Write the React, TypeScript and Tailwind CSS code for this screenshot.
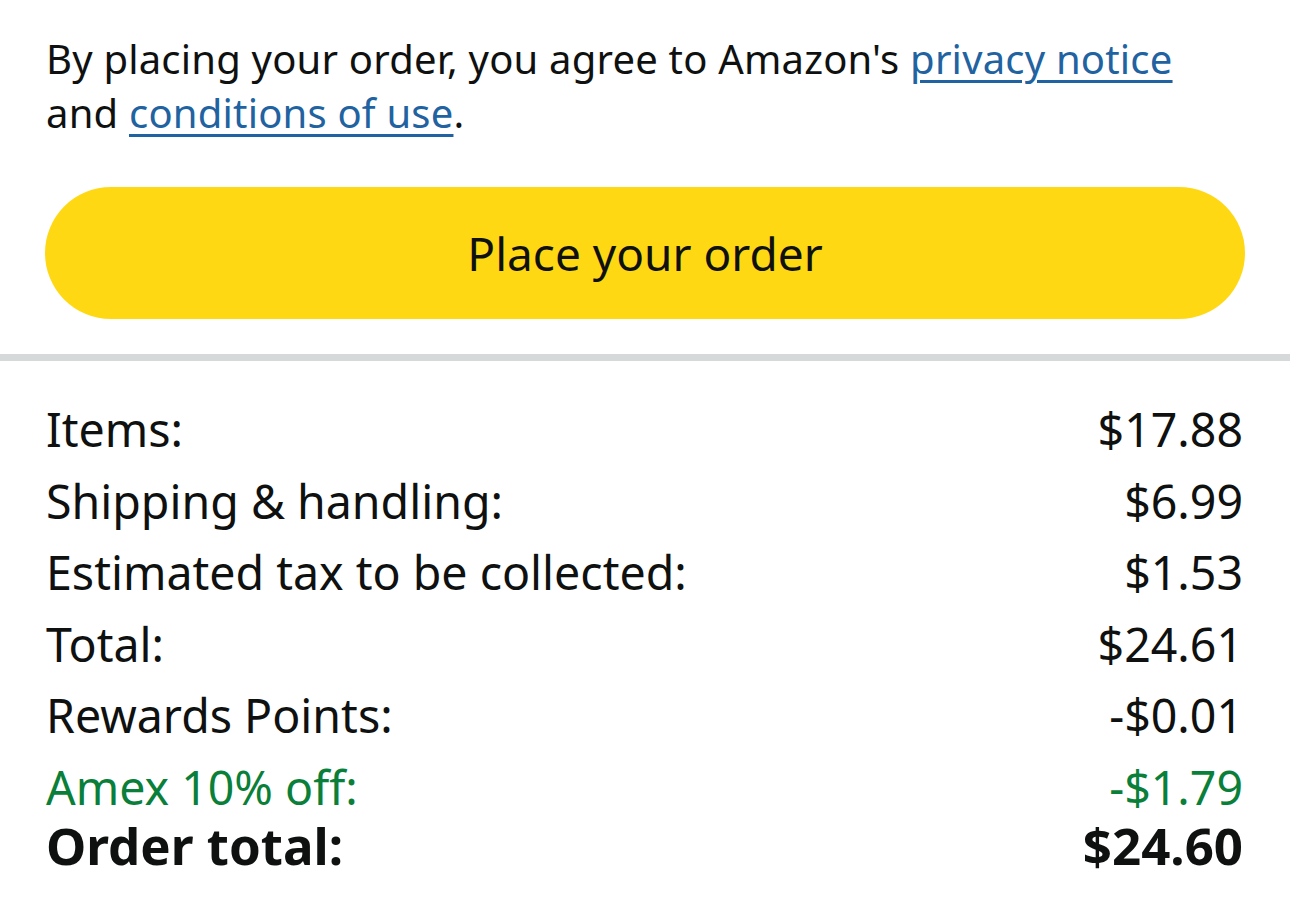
import React from "react";

const rows = [
  { label: "Items:", value: "$17.88" },
  { label: "Shipping & handling:", value: "$6.99" },
  { label: "Estimated tax to be collected:", value: "$1.53" },
  { label: "Total:", value: "$24.61" },
  { label: "Rewards Points:", value: "-$0.01" },
];

export default function App() {
  return (
    <div
      className="w-[1290px] h-[920px] bg-white text-[#0f1111] overflow-hidden"
      style={{ fontFamily: '"Noto Sans", "Open Sans", sans-serif' }}
    >
      {/* Agreement + button */}
      <div className="px-[46px] pt-[32px]">
        <p className="text-[40px] leading-[54px] tracking-[0.2px]">
          By placing your order, you agree to Amazon's{" "}
          <a className="text-[#2162a1] underline underline-offset-[6px] decoration-[3px]">
            privacy notice
          </a>{" "}
          and{" "}
          <a className="text-[#2162a1] underline underline-offset-[6px] decoration-[3px]">
            conditions of use
          </a>
          .
        </p>
        <button className="mt-[47px] w-[1200px] h-[132px] rounded-full bg-[#ffd814] text-[46px] text-[#0f1111] -ml-px">
          Place your order
        </button>
      </div>

      <div className="mt-[35px] h-[7px] bg-[#d5d9d9]" />

      {/* Summary */}
      <div className="pl-[46px] pt-[33px] pr-[47px] flex flex-col">
        {rows.map((r) => (
          <div
            key={r.label}
            className="flex justify-between text-[46.5px] leading-[71.6px]"
          >
            <span>{r.label}</span>
            <span>{r.value}</span>
          </div>
        ))}
        <div className="flex justify-between text-[46.5px] leading-[71.6px] text-[#0a7f3a]">
          <span>Amex 10% off:</span>
          <span>-$1.79</span>
        </div>
        <div className="flex justify-between text-[51px] leading-[54px] font-bold -mt-[6px]">
          <span>Order total:</span>
          <span>$24.60</span>
        </div>
      </div>
    </div>
  );
}
